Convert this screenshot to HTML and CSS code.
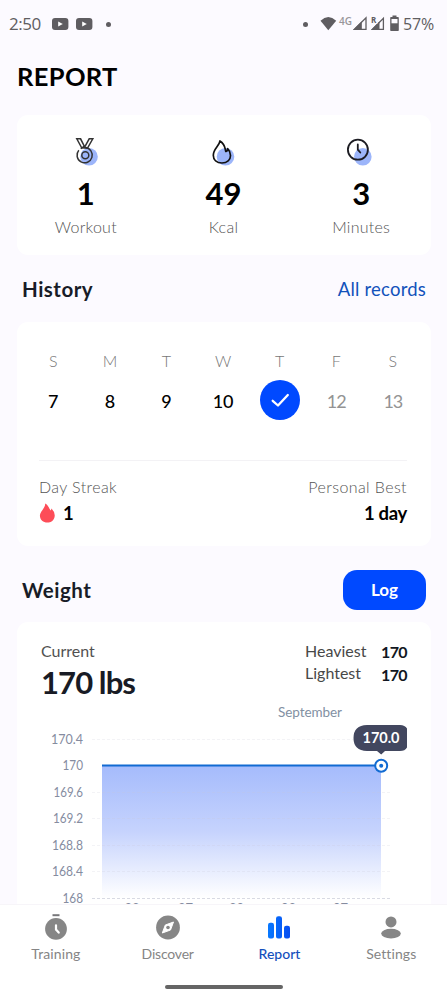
FILE: index.html
```html
<!DOCTYPE html>
<html lang="en">
<head>
<meta charset="utf-8">
<meta name="viewport" content="width=device-width, initial-scale=1">
<title>Report</title>
<link rel="stylesheet" href="styles.css">
</head>
<body>
<div class="screen">
  <header class="status">
    <span class="clock">2:50</span>
    <svg class="yt" width="17" height="12" viewBox="0 0 17 12"><rect width="16.4" height="12" rx="3" fill="#5f5d61"/><path d="M6.2 3.6v4.8L10.8 6z" fill="#fff"/></svg>
    <svg class="yt yt2" width="17" height="12" viewBox="0 0 17 12"><rect width="16.4" height="12" rx="3" fill="#5f5d61"/><path d="M6.2 3.6v4.8L10.8 6z" fill="#fff"/></svg>
    <i class="dot"></i>
    <span class="grow"></span>
    <i class="dot"></i>
    <svg class="signals" width="83" height="18" viewBox="0 0 83 18">
      <path d="M.5 5.7Q8.3-1.5 16.2 5.7L8.3 15.2z" fill="#5f5d61"/>
      <text x="19" y="9.500" class="net" textLength="13" lengthAdjust="spacingAndGlyphs">4G</text>
      <path d="M34.500 14.300L46 2.800v11.500z" fill="none" stroke="#5f5d61" stroke-width="1.300"/><path d="M33 15L41.800 6.300V15z" fill="#5f5d61"/>
      <path d="M52.500 14.300L63.400 3.400v10.900z" fill="none" stroke="#5f5d61" stroke-width="1.300"/><path d="M51 15L59.500 6.500V15z" fill="#5f5d61"/>
      <text x="51" y="8" class="roam">R</text>
      <path d="M71 2h1.500V.5h4V2H78q.8 0 .8.800v12.400q0 .8-.8.800h-7q-.8 0-.8-.8V2.800q0-.8.800-.800z" fill="#5f5d61"/><rect x="71.500" y="4" width="6" height="4.300" fill="#fcfaff"/>
    </svg>
    <span class="battery">57%</span>
  </header>

  <main>
    <h1 class="title">REPORT</h1>

    <section class="card totals">
      <div class="total">
        <svg width="32" height="32" viewBox="0 0 32 32" fill="none" stroke="#333" stroke-width="1.500"><circle cx="19" cy="19.700" r="8.800" fill="#9cb5fa" stroke="none"/><path d="M6.800 1.800h3.800l3.700 7.400-2.500 1.800zM22.800 1.800h-3.600l-5 9 3.200.500zM10.500 2l3.700 7"/><path d="M8.800 13.300A7.600 7.600 0 1 0 15.300 10.600Q12.600 10.400 10.700 11.600"/><circle cx="15.300" cy="18.200" r="3.500"/></svg>
        <strong class="n1">1</strong><span class="l-workout">Workout</span>
      </div>
      <div class="total">
        <svg width="32" height="32" viewBox="0 0 32 32" fill="none" stroke="#111" stroke-width="1.700" stroke-linejoin="round"><circle cx="18.500" cy="19.700" r="8.800" fill="#9cb5fa" stroke="none"/><path d="M12.900 4C12.600 8.500 6.300 12 6.300 18.200C6.300 23.200 9.800 26 14.900 26S23.500 23 23.500 18.500C23.500 15.500 22.200 13.300 20.600 11.700C20.600 13.700 19.800 14.300 18.800 14.500C17.900 11.500 18.400 7.300 12.900 4z"/></svg>
        <strong class="n49">49</strong><span class="l-kcal">Kcal</span>
      </div>
      <div class="total">
        <svg width="32" height="32" viewBox="0 0 32 32" fill="none" stroke="#1c1c22" stroke-width="1.800" stroke-linecap="round"><circle cx="17.800" cy="19.700" r="8.800" fill="#9cb5fa" stroke="none"/><circle cx="12.900" cy="12.700" r="10"/><path d="M12.800 7.500v5.200l2.500 2.800"/></svg>
        <strong>3</strong><span class="l-minutes">Minutes</span>
      </div>
    </section>

    <div class="heading history-heading"><h2 class="h-history">History</h2><a class="records">All records</a></div>

    <section class="card history">
      <div class="week">
        <div class="day"><span>S</span><b>7</b></div>
        <div class="day"><span>M</span><b>8</b></div>
        <div class="day"><span>T</span><b>9</b></div>
        <div class="day"><span>W</span><b>10</b></div>
        <div class="day"><span>T</span><b class="done"><svg width="40" height="40" viewBox="0 0 40 40"><path d="M12.700 20.800L18 25.500L27.800 15" fill="none" stroke="#fff" stroke-width="2.300" stroke-linecap="round" stroke-linejoin="round"/></svg></b></div>
        <div class="day"><span>F</span><b class="future">12</b></div>
        <div class="day"><span>S</span><b class="future">13</b></div>
      </div>
      <div class="streaks">
        <div><span class="l-streak">Day Streak</span><strong><svg width="17" height="20" viewBox="0 0 17 20"><path d="M6.200.4Q7 .4 8.200 2Q10.200 4.500 11.400 7.600Q12.300 7 12.500 5.500Q16 9 15.700 13C15.400 17.300 12 19.600 8.200 19.600S.9 17 .9 12.600C.9 8.500 6.500 5 6.200.400z" fill="#fd4d58"/></svg>1</strong></div>
        <div class="best"><span class="l-best">Personal Best</span><strong class="one-day">1 day</strong></div>
      </div>
    </section>

    <div class="heading weight-heading"><h2 class="h-weight">Weight</h2><button class="log">Log</button></div>

    <section class="card weight">
      <div class="summary">
        <div class="current"><span>Current</span><strong>170 lbs</strong></div>
        <dl class="range"><dt class="l-heavy">Heaviest</dt><dd>170</dd><dt class="l-light">Lightest</dt><dd class="low">170</dd></dl>
      </div>
      <svg class="chart" width="414" height="214" viewBox="17 700 414 214">
        <defs><linearGradient id="area" x1="0" y1="0" x2="0" y2="1"><stop offset="0" stop-color="#a5bbfc"/><stop offset=".5" stop-color="#c6d3fd"/><stop offset="1" stop-color="#ffffff"/></linearGradient></defs>
        <path d="M102 765h279v133H102z" fill="url(#area)"/>
        <path d="M92 739.500H390M92 792.500H390M92 818.500H390M92 845.500H390M92 871.500H390" class="grid"/>
        <path d="M92 898.500H390" class="grid base"/>
        <text x="278" y="717" class="month" textLength="64">September</text>
        <g class="ticks">
          <text x="51" y="743.500" textLength="32" lengthAdjust="spacingAndGlyphs">170.4</text>
          <text x="62.500" y="770.300" textLength="20.500" lengthAdjust="spacingAndGlyphs">170</text>
          <text x="53.500" y="796.800" textLength="29.500" lengthAdjust="spacingAndGlyphs">169.6</text>
          <text x="53" y="823" textLength="30" lengthAdjust="spacingAndGlyphs">169.2</text>
          <text x="52" y="849.500" textLength="31" lengthAdjust="spacingAndGlyphs">168.8</text>
          <text x="52" y="876" textLength="31" lengthAdjust="spacingAndGlyphs">168.4</text>
          <text x="62.500" y="902.500" textLength="20.500" lengthAdjust="spacingAndGlyphs">168</text>
        </g>
        <g class="ticks days"><text x="132" y="912.500">23</text><text x="185.500" y="912.500">27</text><text x="236.500" y="912.500">30</text><text x="288.500" y="912.500">03</text><text x="340.500" y="912.500">07</text></g>
        <path d="M102 765.500H375" stroke="#126bd2" stroke-width="2.200"/>
        <circle cx="381.200" cy="765.700" r="6" fill="#fff" stroke="#126bd2" stroke-width="2"/><circle cx="381.200" cy="765.700" r="2" fill="#126bd2"/>
        <path d="M367 725H400Q405 725 407 728.500V747.500Q405 751 400 751H385L381.200 754.500L377 751H367Q353.500 750.500 353.500 738T367 725z" fill="#42475f"/>
        <text x="362.500" y="743.200" class="bubble" textLength="37">170.0</text>
      </svg>
    </section>
  </main>

  <nav class="tabs">
    <a class="tab"><svg width="28" height="28" viewBox="0 0 28 28"><path d="M10.500 2.200h7" stroke="#77777a" stroke-width="2"/><circle cx="14" cy="15.900" r="10.900" fill="#868686"/><path d="M14 12.300v4.300l2.700 3" fill="none" stroke="#fff" stroke-width="2.200" stroke-linecap="round"/></svg><span class="t-training">Training</span></a>
    <a class="tab"><svg width="28" height="28" viewBox="0 0 28 28"><circle cx="14" cy="14.500" r="11.900" fill="#868686"/><path d="M19.500 9L16.500 17L8.300 20L11.300 12z" fill="#fff" stroke="#fff" stroke-linejoin="round"/><circle cx="14" cy="14.500" r="1.800" fill="#868686"/></svg><span class="t-discover">Discover</span></a>
    <a class="tab active"><svg width="28" height="28" viewBox="0 0 28 28"><defs><linearGradient id="bars" x1="0" x2="1"><stop stop-color="#0879ff"/><stop offset="1" stop-color="#074df1"/></linearGradient></defs><path d="M3 12q0-2.200 2.200-2.200h1.600q2.200 0 2.200 2.200v11.500q0 2-2 2H5q-2 0-2-2zM11 5.500q0-2.300 2.300-2.300h1.400q2.300 0 2.300 2.300v18q0 2-2 2h-2q-2 0-2-2zM19 15q0-2.200 2.200-2.200h1.600q2.200 0 2.200 2.200v8.500q0 2-2 2h-2q-2 0-2-2z" fill="url(#bars)"/></svg><span class="t-report">Report</span></a>
    <a class="tab"><svg width="28" height="28" viewBox="0 0 28 28" fill="#868686"><circle cx="14" cy="8.900" r="5.500"/><ellipse cx="14" cy="20.600" rx="9.800" ry="4.900"/></svg><span class="t-settings">Settings</span></a>
  </nav>
  <div class="home"><i></i></div>
</div>
</body>
</html>
```
FILE: styles.css
```css
* { box-sizing: border-box; }
body { margin: 0; background: #fcfaff; font-family: Lato, "Open Sans", sans-serif; color: #000; }
h1, h2, dl, dd { margin: 0; }
svg { display: block; flex: none; }
.screen { width: 447px; height: 1000px; display: flex; flex-direction: column; overflow: hidden; }

.status { flex: none; height: 48px; padding: 0 13px 0 9px; display: flex; align-items: center; color: #5f5d61; font: 16px/20px "Open Sans", sans-serif; }
.clock { width: 43px; font-size: 17px; letter-spacing: -.5px; }
.yt2 { margin-left: 7px; }
.dot { width: 5px; height: 5px; border-radius: 50%; background: #5f5d61; }
.yt2 + .dot { margin-left: 12.500px; }
.grow { flex: 1; }
.signals { margin-left: 12px; }
.net { font: 600 10px "Open Sans", sans-serif; fill: #98969a; }
.roam { font: 700 8px "Open Sans", sans-serif; fill: #5f5d61; stroke: #fcfaff; stroke-width: 1.500px; paint-order: stroke; }
.battery { width: 31px; letter-spacing: -.2px; white-space: nowrap; }

main { flex: 1; min-height: 0; overflow: hidden; padding: 0 16px 0 17px; display: flex; flex-direction: column; }
.title { flex: none; height: 67px; line-height: 57px; font-size: 25.500px; font-weight: 700; letter-spacing: .35px; }
.card { flex: none; background: #fff; border-radius: 11px; }

.totals { height: 140px; padding: 22px 1px 0 0; display: grid; grid-template-columns: repeat(3, 1fr); }
.total { display: flex; flex-direction: column; align-items: center; }
.total strong { font-size: 31px; font-weight: 700; line-height: 32px; margin-top: 8px; }
.total span { font-size: 16px; line-height: 20px; margin-top: 8px; color: #555; font-weight: 300; letter-spacing: .25px; }

.heading { flex: none; display: flex; align-items: center; justify-content: space-between; padding: 0 5px; }
.heading h2 { font-size: 20.500px; line-height: 26px; color: #181c27; font-weight: 700; letter-spacing: .5px; }
.history-heading { height: 67px; }
.records { font-size: 18.500px; color: #1252bb; letter-spacing: .2px; }

.history { height: 224px; padding: 29px 8px 0; }
.week { height: 109px; display: grid; grid-template-columns: repeat(7, 56.600px); }
.day { display: flex; flex-direction: column; align-items: center; }
.day span { font-size: 16px; line-height: 20px; color: #777; font-weight: 300; }
.day b { margin-top: 9px; height: 40px; line-height: 42px; font-size: 18px; font-weight: 500; }
.day .future { color: #939393; font-weight: 400; letter-spacing: -1px; }
.day .done { width: 40px; border-radius: 50%; background: #0049ff; }
.streaks { margin: 0 16px 0 14px; padding-top: 16px; border-top: 1px solid #f3f2f5; display: flex; justify-content: space-between; color: #555; font-size: 16px; line-height: 20px; font-weight: 300; }
.streaks span { display: block; letter-spacing: .4px; }
.streaks strong { display: flex; align-items: center; margin-top: 4px; height: 24px; gap: 7px; color: #000; font-size: 18.500px; font-weight: 700; }
.best { text-align: right; }
.best strong { justify-content: flex-end; letter-spacing: -.3px; }

.weight-heading { height: 76px; padding-top: 12px; }
.log { width: 83px; height: 40px; border: 0; border-radius: 14px; background: #0049ff; color: #fff; font: 700 17px/38px Lato, sans-serif; padding: 0; }
.weight { height: 300px; overflow: hidden; }
.summary { height: 78px; padding: 19px 24px 0; display: flex; justify-content: space-between; }
.current { display: flex; flex-direction: column; color: #515151; font-size: 16px; line-height: 20px; }
.current strong { color: #181b25; font-size: 31px; line-height: 36px; margin-top: 3px; font-weight: 700; letter-spacing: -.9px; }
.range { display: grid; grid-template-columns: 76px 26px; grid-auto-rows: 22px; font-size: 16px; line-height: 20px; color: #484848; }
.range dd { color: #111722; font-weight: 700; line-height: 22px; letter-spacing: -.6px; }
.range .low { padding-top: 1px; }
.grid { fill: none; stroke: #c8cad7; stroke-opacity: .22; stroke-width: 1; stroke-dasharray: 3 2; }
.base { stroke-opacity: .7; }
.month { font-size: 13.500px; fill: #8290a2; }
.ticks { font-size: 14px; fill: #858c9f; }
.days { font-size: 13px; text-anchor: middle; }
.bubble { font-size: 14.500px; font-weight: 700; fill: #fff; }

.tabs { flex: none; height: 66px; background: #fff; border-top: 1px solid #f7f5f9; display: grid; grid-template-columns: repeat(4, 111.800px); padding-top: 8px; }
.tab { display: flex; flex-direction: column; align-items: center; color: #858585; font-size: 14px; line-height: 18px; }
.tab span { margin-top: 4px; }
.t-training, .t-settings { letter-spacing: .1px; }
.t-discover { letter-spacing: -.2px; }
.active { color: #1450bd; font-weight: 500; }
.home { flex: none; height: 30px; background: #fff; display: flex; justify-content: center; padding-top: 15px; }
.home i { width: 118px; height: 4px; border-radius: 2px; background: #656565; }
```
